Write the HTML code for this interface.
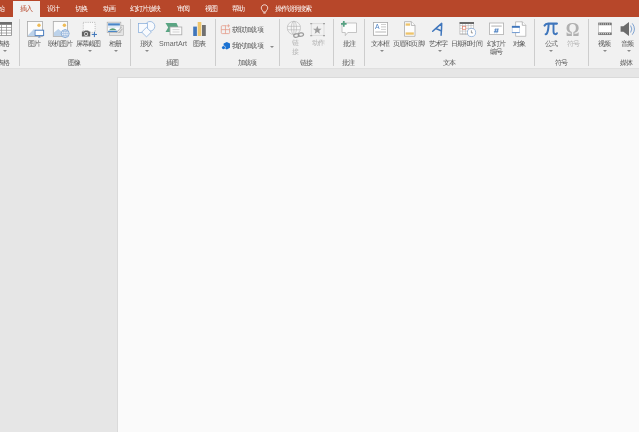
<!DOCTYPE html>
<html><head><meta charset="utf-8">
<style>
html,body{margin:0;padding:0;}
body{width:639px;height:432px;overflow:hidden;position:relative;background:#e6e6e6;font-family:"Liberation Sans",sans-serif;}
.abs{position:absolute;}
.tab i,.lbl i,.glbl i{display:inline-block;font-style:normal;text-align:center;letter-spacing:0;}
.tab,.lbl,.glbl,svg{will-change:transform;}
#tabbar{position:absolute;left:0;top:0;width:639px;height:17px;background:#b7472a;}
.tab{position:absolute;top:4px;font-size:6.6px;line-height:10px;color:#fff;white-space:nowrap;}
#activetab{position:absolute;left:13px;top:1px;width:27px;height:17px;background:#f1f1f1;}
#ribbon{position:absolute;left:0;top:17px;width:639px;height:51px;background:#f1f1f1;border-bottom:1px solid #dfdfdf;}
.sep{position:absolute;top:19px;width:1px;height:47px;background:#cdcdcd;}
.lbl{position:absolute;font-size:6.6px;line-height:8px;color:#565656;white-space:nowrap;text-align:center;}
.glbl{position:absolute;top:58.7px;font-size:6.6px;line-height:8px;color:#555;white-space:nowrap;}
.dis{color:#b2b2b2;}
.arr{position:absolute;top:50px;width:0;height:0;border-left:2px solid transparent;border-right:2px solid transparent;border-top:2px solid #8a8a8a;}
svg{position:absolute;overflow:visible;}
#slide{position:absolute;left:117px;top:77px;width:522px;height:355px;background:#fafafa;border-left:1px solid #dadada;border-top:1px solid #dadada;box-sizing:border-box;}
</style></head><body>
<div id="tabbar"></div>
<div id="activetab"></div>
<div class="tab" style="left:-1.85px"><i style="width:6.30px">始</i></div>
<div class="tab" style="left:20.15px;color:#b7472a"><i style="width:6.30px">插</i><i style="width:6.30px">入</i></div>
<div class="tab" style="left:47.15px"><i style="width:6.30px">设</i><i style="width:6.30px">计</i></div>
<div class="tab" style="left:74.65px"><i style="width:6.30px">切</i><i style="width:6.30px">换</i></div>
<div class="tab" style="left:102.65px"><i style="width:6.30px">动</i><i style="width:6.30px">画</i></div>
<div class="tab" style="left:129.78px"><i style="width:6.05px">幻</i><i style="width:6.05px">灯</i><i style="width:6.05px">片</i><i style="width:6.05px">放</i><i style="width:6.05px">映</i></div>
<div class="tab" style="left:176.65px"><i style="width:6.30px">审</i><i style="width:6.30px">阅</i></div>
<div class="tab" style="left:204.65px"><i style="width:6.30px">视</i><i style="width:6.30px">图</i></div>
<div class="tab" style="left:231.65px"><i style="width:6.30px">帮</i><i style="width:6.30px">助</i></div>
<div class="tab" style="left:275.32px"><i style="width:5.95px">操</i><i style="width:5.95px">作</i><i style="width:5.95px">说</i><i style="width:5.95px">明</i><i style="width:5.95px">搜</i><i style="width:5.95px">索</i></div>
<svg style="left:0;top:0" width="639" height="20" viewBox="0 0 639 20"><path d="M264.5 4.8C262.6 4.8 261.3 6.2 261.3 7.9C261.3 9.3 262.2 10.1 262.9 11.1L263.3 12.1H265.7L266.1 11.1C266.8 10.1 267.7 9.3 267.7 7.9C267.7 6.2 266.4 4.8 264.5 4.8Z" fill="none" stroke="#fff" stroke-width="0.8"/><path d="M263.4 13.1H265.6" stroke="#fff" stroke-width="0.8"/></svg>

<div id="ribbon"></div>
<div id="slide"></div>

<!-- separators -->
<div class="sep" style="left:19px"></div>
<div class="sep" style="left:130px"></div>
<div class="sep" style="left:215px"></div>
<div class="sep" style="left:279px"></div>
<div class="sep" style="left:333px"></div>
<div class="sep" style="left:364px"></div>
<div class="sep" style="left:534px"></div>
<div class="sep" style="left:588px"></div>

<!-- labels -->
<div class="lbl" style="left:-3.27px;top:39.6px"><i style="width:6.15px">表</i><i style="width:6.15px">格</i></div>
<div class="arr" style="left:3px"></div>
<div class="glbl" style="left:-3.27px"><i style="width:6.15px">表</i><i style="width:6.15px">格</i></div>

<div class="lbl" style="left:28.23px;top:39.6px"><i style="width:6.15px">图</i><i style="width:6.15px">片</i></div>
<div class="lbl" style="left:47.73px;top:39.6px"><i style="width:6.15px">联</i><i style="width:6.15px">机</i><i style="width:6.15px">图</i><i style="width:6.15px">片</i></div>
<div class="lbl" style="left:76.22px;top:39.6px"><i style="width:6.15px">屏</i><i style="width:6.15px">幕</i><i style="width:6.15px">截</i><i style="width:6.15px">图</i></div>
<div class="arr" style="left:88px"></div>
<div class="lbl" style="left:109.22px;top:39.6px"><i style="width:6.15px">相</i><i style="width:6.15px">册</i></div>
<div class="arr" style="left:114px"></div>
<div class="glbl" style="left:68.22px"><i style="width:6.15px">图</i><i style="width:6.15px">像</i></div>

<div class="lbl" style="left:140.22px;top:39.6px"><i style="width:6.15px">形</i><i style="width:6.15px">状</i></div>
<div class="arr" style="left:145px"></div>
<div class="lbl" style="left:159.3px;top:39.6px;font-size:7.1px;letter-spacing:0;color:#686868">SmartArt</div>
<div class="lbl" style="left:193.22px;top:39.6px"><i style="width:6.15px">图</i><i style="width:6.15px">表</i></div>
<div class="glbl" style="left:166.22px"><i style="width:6.15px">插</i><i style="width:6.15px">图</i></div>

<div class="lbl" style="left:232.22px;top:25.6px"><i style="width:6.15px">获</i><i style="width:6.15px">取</i><i style="width:6.15px">加</i><i style="width:6.15px">载</i><i style="width:6.15px">项</i></div>
<div class="lbl" style="left:232.22px;top:41.6px"><i style="width:6.15px">我</i><i style="width:6.15px">的</i><i style="width:6.15px">加</i><i style="width:6.15px">载</i><i style="width:6.15px">项</i></div>
<div class="arr" style="left:269.5px;top:46px"></div>
<div class="glbl" style="left:237.72px"><i style="width:6.15px">加</i><i style="width:6.15px">载</i><i style="width:6.15px">项</i></div>

<div class="lbl dis" style="left:291.9px;top:39px"><i style="width:6.15px">链</i></div>
<div class="lbl dis" style="left:291.9px;top:47.7px"><i style="width:6.15px">接</i></div>
<div class="lbl dis" style="left:311.5px;top:39.1px"><i style="width:6.15px">动</i><i style="width:6.15px">作</i></div>
<div class="glbl" style="left:299.73px"><i style="width:6.15px">链</i><i style="width:6.15px">接</i></div>

<div class="lbl" style="left:342.73px;top:39.6px"><i style="width:6.15px">批</i><i style="width:6.15px">注</i></div>
<div class="glbl" style="left:341.73px"><i style="width:6.15px">批</i><i style="width:6.15px">注</i></div>

<div class="lbl" style="left:371.23px;top:39.6px"><i style="width:6.15px">文</i><i style="width:6.15px">本</i><i style="width:6.15px">框</i></div>
<div class="arr" style="left:379.5px"></div>
<div class="lbl" style="left:393.23px;top:39.6px"><i style="width:6.15px">页</i><i style="width:6.15px">眉</i><i style="width:6.15px">和</i><i style="width:6.15px">页</i><i style="width:6.15px">脚</i></div>
<div class="lbl" style="left:429.23px;top:39.6px"><i style="width:6.15px">艺</i><i style="width:6.15px">术</i><i style="width:6.15px">字</i></div>
<div class="arr" style="left:437.5px"></div>
<div class="lbl" style="left:451.03px;top:39.6px"><i style="width:6.15px">日</i><i style="width:6.15px">期</i><i style="width:6.15px">和</i><i style="width:6.15px">时</i><i style="width:6.15px">间</i></div>
<div class="lbl" style="left:486.53px;top:39.6px"><i style="width:6.15px">幻</i><i style="width:6.15px">灯</i><i style="width:6.15px">片</i></div>
<div class="lbl" style="left:489.53px;top:47.6px"><i style="width:6.15px">编</i><i style="width:6.15px">号</i></div>
<div class="lbl" style="left:512.73px;top:39.6px"><i style="width:6.15px">对</i><i style="width:6.15px">象</i></div>
<div class="glbl" style="left:443.23px"><i style="width:6.15px">文</i><i style="width:6.15px">本</i></div>

<div class="lbl" style="left:544.73px;top:39.6px"><i style="width:6.15px">公</i><i style="width:6.15px">式</i></div>
<div class="arr" style="left:549px"></div>
<div class="lbl dis" style="left:566.73px;top:39.6px"><i style="width:6.15px">符</i><i style="width:6.15px">号</i></div>
<div class="glbl" style="left:555.02px"><i style="width:6.15px">符</i><i style="width:6.15px">号</i></div>

<div class="lbl" style="left:598.23px;top:39.6px"><i style="width:6.15px">视</i><i style="width:6.15px">频</i></div>
<div class="arr" style="left:603px"></div>
<div class="lbl" style="left:621.23px;top:39.6px"><i style="width:6.15px">音</i><i style="width:6.15px">频</i></div>
<div class="arr" style="left:626.5px"></div>
<div class="glbl" style="left:620.12px"><i style="width:6.15px">媒</i><i style="width:6.15px">体</i></div>

<!-- ICONS -->
<svg style="left:0;top:0" width="639" height="432" viewBox="0 0 639 432">
<!-- table -->
<g>
<rect x="-2" y="22.5" width="13.5" height="13" fill="#fff" stroke="#8a8a8a" stroke-width="0.8"/>
<rect x="-2" y="22" width="14" height="2.8" fill="#6e6e6e"/>
<path d="M1.5 24.5V35.5M6.5 24.5V35.5M-2 27.5H11.5M-2 30.3H11.5M-2 33H11.5" stroke="#8a8a8a" stroke-width="0.7"/>
</g>
<!-- picture -->
<g>
<rect x="27.5" y="21.5" width="15" height="15" fill="#fbfbfb" stroke="#a9a9a9" stroke-width="0.8"/>
<circle cx="39" cy="25.3" r="1.7" fill="#eebb55"/>
<path d="M28 35.2L34.2 28.7V36.1H28Z" fill="#bcd2ea"/>
<rect x="35" y="30.2" width="8.6" height="5.4" fill="#fff" stroke="#4d7fbf" stroke-width="1"/>
<path d="M37.8 37.6L39.3 36.2L40.8 37.6Z" fill="#4d7fbf"/>
</g>
<!-- online picture -->
<g>
<rect x="53.3" y="21.5" width="14.2" height="15" fill="#fbfbfb" stroke="#a9a9a9" stroke-width="0.8"/>
<circle cx="64.4" cy="25.2" r="1.7" fill="#eebb55"/>
<path d="M54 36.1V32.5L58.3 29L62 32V36.1Z" fill="#bcd2ea"/>
<circle cx="65.2" cy="33.6" r="4" fill="#f4f7fb" stroke="#6a96cc" stroke-width="0.7"/>
<path d="M61.2 33.6H69.2M65.2 29.6V37.6M61.8 31.6H68.6M61.8 35.6H68.6" stroke="#7ea4d4" stroke-width="0.45"/>
<ellipse cx="65.2" cy="33.6" rx="2" ry="4" fill="none" stroke="#7ea4d4" stroke-width="0.45"/>
</g>
<!-- screenshot -->
<g>
<rect x="83.3" y="22.4" width="11.8" height="10" fill="#f9f9f9" stroke="#888" stroke-width="0.6" stroke-dasharray="0.9 1.3"/>
<path d="M81.9 31.6h2l1-1.2h3.2l1 1.2h1.1v5H81.9z" fill="#626262"/>
<circle cx="86.1" cy="33.9" r="2" fill="#e9e9e9"/>
<circle cx="86.1" cy="33.9" r="1.2" fill="#626262"/>
<path d="M94.4 31.8V37.1M91.8 34.45H97" stroke="#3d74b9" stroke-width="1"/>
</g>
<!-- album -->
<g>
<rect x="109.4" y="25.3" width="13.9" height="10.2" fill="#e6e6e6" stroke="#b3b3b3" stroke-width="0.7"/>
<rect x="107.2" y="22.2" width="13.6" height="10.4" fill="#fdfdfd" stroke="#a9a9a9" stroke-width="0.7"/>
<rect x="108.1" y="23.3" width="11.8" height="2.4" fill="#4a86c8"/>
<path d="M108.1 25.7h11.8v2.2q-3-0.8-5.5 0t-6.3 0z" fill="#dfe9f5"/>
<path d="M108.8 30.3Q112.7 26.2 116.8 30.3Z" fill="#5a9e74"/>
<rect x="108.1" y="30.8" width="11.8" height="1.2" fill="#4a86c8"/>
<path d="M116.2 32.6L120.8 27.4V32.6Z" fill="#e3e3e3"/>
<path d="M116.4 32.6L121.6 26.9M118.6 33.1L122.6 28.7" stroke="#8e8e8e" stroke-width="0.6"/>
</g>
<!-- shapes -->
<g fill="#f8fafd" stroke="#80a8d9" stroke-width="0.7">
<circle cx="150" cy="26.3" r="4.8"/>
<rect x="138.6" y="23.6" width="9" height="9"/>
<path d="M146.5 27.3L151.3 32.1L146.5 36.9L141.7 32.1Z"/>
</g>
<!-- smartart -->
<g>
<path d="M165.5 23H176.5L178.5 27.5L176.5 32H165.5L168.2 27.5Z" fill="#5aa583"/>
<rect x="170" y="27" width="11.8" height="7.8" fill="#fafafa" stroke="#a9a9a9" stroke-width="0.8"/>
<path d="M172.5 29.6h7M172.5 32h7" stroke="#bbb" stroke-width="0.6"/>
</g>
<!-- chart -->
<g>
<rect x="193.2" y="26.6" width="3.7" height="9.4" fill="#4176bb"/>
<rect x="197.7" y="22" width="3.6" height="14" fill="#eec56c"/>
<rect x="202" y="25" width="3.8" height="11" fill="#707070"/>
</g>
<!-- get add-ins -->
<g fill="none" stroke="#e39583" stroke-width="0.75">
<path d="M226.5 25.7H222.3Q221.3 25.7 221.3 26.7V32.6Q221.3 33.6 222.3 33.6H228.6Q229.6 33.6 229.6 32.6V28.2"/>
<path d="M225.45 25.7V33.6M221.3 29.65H229.6"/>
<path d="M228.4 24.2V27.4M226.8 25.8H230" stroke-width="0.7"/>
</g>
<!-- my add-ins -->
<g>
<path d="M223.6 43.6L226.8 42L230 43.6V47.8L226.8 49.6L223.6 47.8Z" fill="#1b72d2"/>
<circle cx="223.5" cy="47.6" r="2.1" fill="#f1f1f1"/>
<circle cx="223.5" cy="47.6" r="1.6" fill="#1b72d2"/>
</g>
<!-- hyperlink -->
<g fill="none" stroke="#b5b5b5" stroke-width="0.65">
<circle cx="293.9" cy="27.9" r="6.6" fill="#f6f6f6"/>
<ellipse cx="293.9" cy="27.9" rx="2.6" ry="6.6"/>
<path d="M293.9 21.3V34.5M287.5 26.3H300.3M287.5 29.8H300.3"/>
</g>
<g fill="none" stroke="#999" stroke-width="1.2" transform="rotate(-12 298.5 35)">
<ellipse cx="296.3" cy="35.1" rx="2.7" ry="1.7" fill="#f1f1f1"/>
<ellipse cx="300.9" cy="35.1" rx="2.7" ry="1.7"/>
</g>
<!-- action -->
<g>
<rect x="311.2" y="23.7" width="12.8" height="11.6" fill="none" stroke="#d4d4d4" stroke-width="0.7"/>
<path d="M310.2 23h2v1.3h-2zM323 23h2v1.3h-2zM310.2 34.9h2v1.3h-2zM323 34.9h2v1.3h-2z" fill="#a3a3a3"/>
<path d="M317.30 25.70L318.42 28.66L321.58 28.81L319.11 30.79L319.95 33.84L317.30 32.10L314.65 33.84L315.49 30.79L313.02 28.81L316.18 28.66Z" fill="#9e9e9e"/>
</g>
<!-- comment -->
<g>
<path d="M342 23h14.5v9.5H347.8L345.3 35.6V32.5H342Z" fill="#fcfcfc" stroke="#b0b0b0" stroke-width="0.7"/>
<path d="M343.8 21.1V26.7M341 23.9H346.6" stroke="#56a182" stroke-width="1.7"/>
</g>
<!-- text box -->
<g>
<rect x="373.5" y="22.4" width="14.1" height="12.9" fill="#fff" stroke="#a9a9a9" stroke-width="0.8"/>
<text x="375.1" y="29.3" font-family="Liberation Sans" font-size="6.8" fill="#4a7fc0">A</text>
<path d="M381 24.5h5M381 29.4h5" stroke="#c4c4c4" stroke-width="0.8"/>
<path d="M381 26.9h5" stroke="#cfcfcf" stroke-width="1.2"/>
<path d="M375.3 32h10.8" stroke="#cfcfcf" stroke-width="1.5"/>
</g>
<!-- header footer -->
<g>
<path d="M404.5 21.7H411.3L415 25.4V36.3H404.5Z" fill="#fdfdfd" stroke="#a9a9a9" stroke-width="0.8"/>
<path d="M411.3 21.7V25.4H415" fill="#fff" stroke="#9a9a9a" stroke-width="0.7"/>
<rect x="405.6" y="23.4" width="4.4" height="2.3" fill="#eec46a"/>
<rect x="405.6" y="32.4" width="8.2" height="2.3" fill="#eec46a"/>
</g>
<!-- wordart -->
<path d="M432.7 31.3Q437.5 27 441.7 23.4Q441.6 29 441.1 35.2M436.3 28.7Q438.8 29.6 441.4 31.1" fill="none" stroke="#3f76bc" stroke-width="1.5" stroke-linecap="round" stroke-linejoin="round"/>
<!-- date time -->
<g>
<rect x="459.9" y="22.4" width="13.8" height="12.2" fill="#fff" stroke="#b0b0b0" stroke-width="0.6"/>
<rect x="459.6" y="22" width="14.4" height="2" fill="#6a6a6a"/>
<path d="M462.6 24V34.6M465.4 24V34.6M468.2 24V34.6M471 24V34.6M459.9 25.6H473.7M459.9 28.4H473.7M459.9 31.1H473.7M459.9 33.6H473.7" stroke="#a8a8a8" stroke-width="0.5"/>
<rect x="462.6" y="26.3" width="3.2" height="3" fill="#fff" stroke="#e2846f" stroke-width="0.75"/>
<circle cx="471.5" cy="32.5" r="4.1" fill="#fff" stroke="#7fa7d8" stroke-width="0.75"/>
<path d="M471.4 30.3V32.9H473" fill="none" stroke="#555" stroke-width="0.55"/>
</g>
<!-- slide number -->
<g>
<rect x="489.4" y="23" width="14.2" height="11.4" fill="#fff" stroke="#b0b0b0" stroke-width="0.8"/>
<path d="M491.3 26.1h10.4" stroke="#cdcdcd" stroke-width="1.6"/>
<path d="M496 28.2L494.8 33.2M498 28.2L496.8 33.2M494.3 29.9H498.7M493.9 31.6H498.3" stroke="#4a7fc0" stroke-width="0.8"/>
</g>
<!-- object -->
<g>
<path d="M515.6 21.8H522.3L525.8 25.3V36.3H515.6Z" fill="#fff" stroke="#a9a9a9" stroke-width="0.7"/>
<path d="M522.3 21.8V25.3H525.8" fill="#fff" stroke="#9a9a9a" stroke-width="0.7"/>
<rect x="512.2" y="26.2" width="7.3" height="6.4" fill="#fff" stroke="#a3c0e3" stroke-width="0.6"/>
<rect x="511.9" y="25.9" width="7.9" height="1.9" fill="#3f76bc"/>
<path d="M511.9 32.6H519.8" stroke="#5b8ac6" stroke-width="0.8"/>
</g>
<!-- pi -->
<g fill="none" stroke="#3f76bc" stroke-linecap="round">
<path d="M544.6 25.6Q545.6 23.6 548.2 23.6H556.9" stroke-width="2.2"/>
<path d="M548.6 24.5Q548.4 30.5 547 33.2Q546.4 34.3 545.6 34.2" stroke-width="2"/>
<path d="M553.5 24.5V31.6Q553.5 34.2 555.5 34.2Q556.6 34.2 557 33.2" stroke-width="1.9"/>
</g>
<!-- omega -->
<text x="0" y="0" transform="translate(565.8 35.7) scale(0.9 1)" font-family="Liberation Serif" font-weight="bold" font-size="19" fill="#b0b0b0">Ω</text>
<!-- video -->
<g>
<rect x="598.6" y="22.9" width="12.8" height="11.9" fill="#fff" stroke="#a0a0a0" stroke-width="0.5"/>
<rect x="598.4" y="22.8" width="13.2" height="2.4" fill="#6f6f6f"/>
<rect x="598.4" y="32.5" width="13.2" height="2.4" fill="#6f6f6f"/>
<path d="M599.2 24h11.8M599.2 33.7h11.8" stroke="#e8e8e8" stroke-width="1" stroke-dasharray="1 0.95"/>
</g>
<!-- audio -->
<g>
<path d="M620.6 26.3h2.8l5.6-4.2v13.8l-5.6-4.2h-2.8z" fill="#6b6b6b"/>
<path d="M630.6 25.6Q633 29 630.6 32.5M632.3 23.4Q636.6 29 632.3 34.7" fill="none" stroke="#5b8ac6" stroke-width="0.75"/>
</g>
</svg>
</body></html>
